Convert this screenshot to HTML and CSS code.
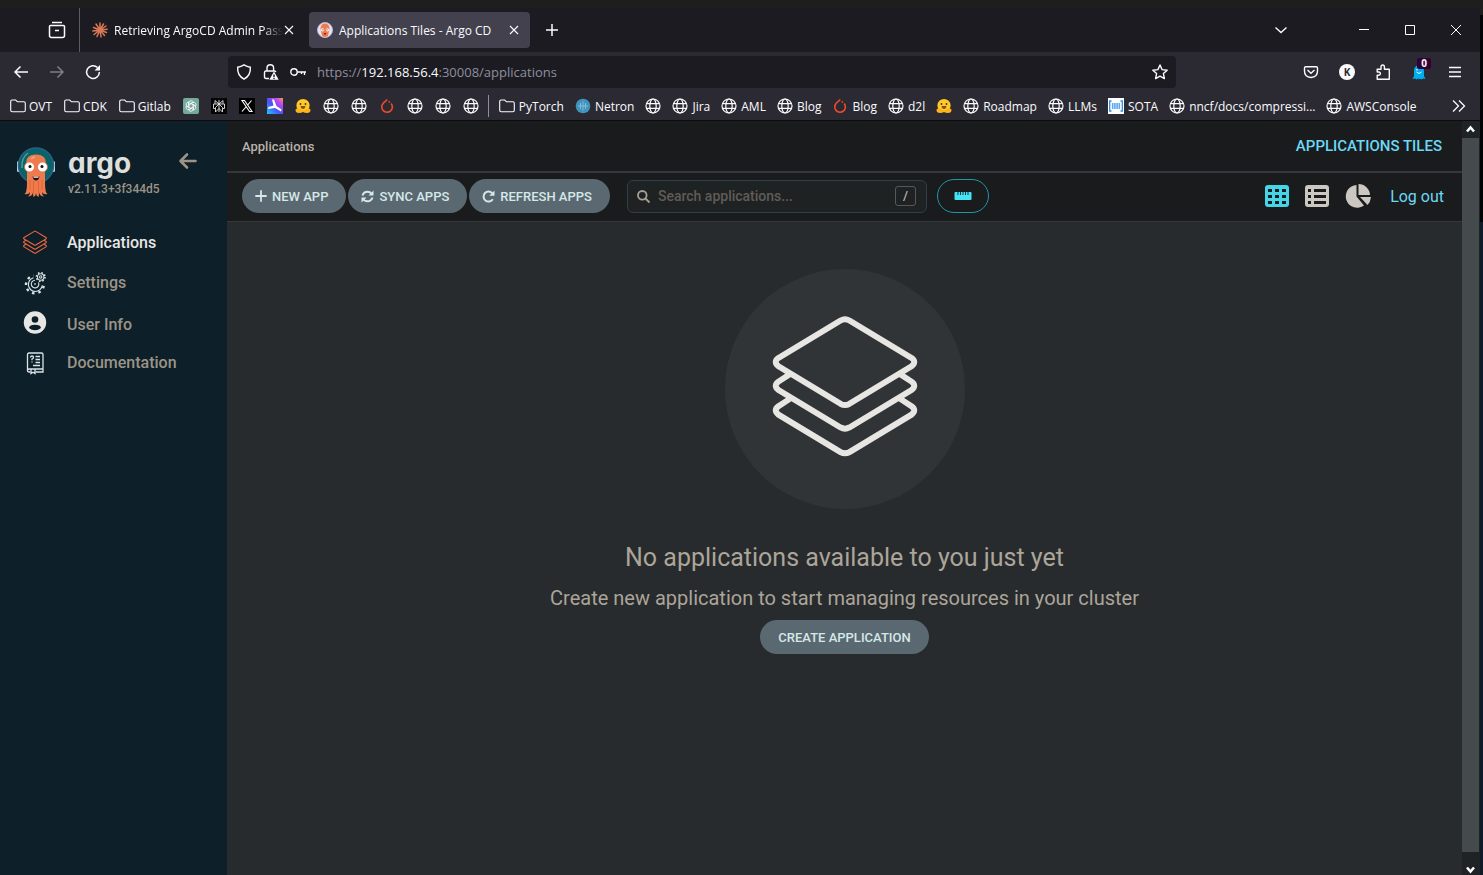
FILE: index.html
```html
<!DOCTYPE html>
<html lang="en">
<head>
<meta charset="utf-8">
<title>Applications Tiles - Argo CD</title>
<link rel="stylesheet" href="styles.css">
</head>
<body>
<svg class="defs" aria-hidden="true">
  <symbol id="globe" viewBox="0 0 16 16"><g fill="none" stroke="#fbfbfe" stroke-width="1.2"><circle cx="8" cy="8" r="7"/><ellipse cx="8" cy="8" rx="3.2" ry="7"/><path d="M1.5 5.6h13M1.5 10.4h13"/></g></symbol>
  <symbol id="folder" viewBox="0 0 16 16"><path d="M2.2 2h3.5l1.8 1.8h6.3q1.5 0 1.5 1.5v6.9q0 1.5-1.5 1.5H2.200q-1.500 0-1.500-1.500V3.500Q.7 2 2.200 2z" fill="none" stroke="#fbfbfe" stroke-width="1.1"/></symbol>
  <symbol id="hug" viewBox="0 0 16 16"><circle cx="8" cy="7.500" r="6.600" fill="#ffc928"/><path d="M.5 12q0-2 2.500-1.500L8 12.500l5-2q2.500-.5 2.500 1.500 0 3-3.500 3-2.500 0-4-1-1.500 1-4 1-3.500 0-3.500-3z" fill="#ffb31a"/><path d="M5.500 8h5q-.5 3-2.500 3t-2.500-3z" fill="#8a4b20"/><circle cx="5.500" cy="6" r=".9" fill="#3b3222"/><circle cx="10.500" cy="6" r=".9" fill="#3b3222"/></symbol>
  <symbol id="torch" viewBox="0 0 16 16"><path d="M8.300 1.500 4.300 5.200a5.300 5.300 0 1 0 7.800.3" fill="none" stroke="#ee4c2c" stroke-width="1.600"/><circle cx="10.300" cy="3.800" r=".9" fill="#ee4c2c"/></symbol>
  <symbol id="cross" viewBox="0 0 16 16"><path d="m4 4 8 8m0-8-8 8" fill="none" stroke="#fbfbfe" stroke-width="1.100"/></symbol>
  <symbol id="layers" viewBox="0 2 148 144" overflow="visible"><g fill="none" stroke="currentColor" stroke-linejoin="round"><path d="M69.500 4.500q4.500-2.500 9 0l63 38q5.500 4 0 8.500l-63 38q-4.500 2.500-9 0l-63-38q-5.500-4.500 0-8.500z"/><path d="M18 59 6.500 66.500q-5.500 4 0 8.500l63 38q4.500 2.500 9 0l63-38q5.500-4.500 0-8.500L130 59"/><path d="M18 84 6.500 91.500q-5.500 4 0 8.500l63 38q4.500 2.500 9 0l63-38q5.500-4.500 0-8.500L130 84"/></g></symbol>
</svg>

<div class="desktop">
<div class="window">
  <div class="tabstrip">
    <button class="recent" aria-label="Recent browsing"><svg width="18" height="18" viewBox="0 0 18 18" fill="none" stroke="#fbfbfe" stroke-width="1.500"><path d="M4 1.500h10M2.500 4.500h13q1 0 1 1v9q0 2-2 2h-11q-2 0-2-2v-9q0-1 1-1zM7 9.500h4"/></svg></button>
    <div class="tab">
      <svg class="i16" viewBox="0 0 16 16" stroke="#d97757" stroke-width="1.500" stroke-linecap="round"><path d="M8 8V1M8 8l3.500-6M8 8l6-4M8 8l7.200-.8M8 8l6.500 2.500M8 8l4.500 5.500M8 8l1 7M8 8l-3 6.500M8 8l-6 4.500M8 8l-7.200 1M8 8 1.500 5.500M8 8 4 2"/></svg>
      <span class="tab-title fade">Retrieving ArgoCD Admin Passw</span>
      <button class="tab-close" aria-label="Close tab"><svg class="i16"><use href="#cross"/></svg></button>
    </div>
    <div class="tab active">
      <svg class="i16" viewBox="0 0 16 16"><circle cx="8" cy="8" r="7.500" fill="#e8e4f2" stroke="#b8b4e0"/><path d="M3.500 7q0-5.500 4.500-5.500T12.500 7l-1.500 7q-3 2-6 0z" fill="#ef7b4d"/><circle cx="5.600" cy="7.800" r="1.600" fill="#fff"/><circle cx="10.400" cy="7.800" r="1.600" fill="#fff"/><circle cx="6" cy="7.800" r=".6" fill="#223"/><circle cx="10" cy="7.800" r=".6" fill="#223"/><path d="M7 11h2v1.500H7z" fill="#6d2c1c"/></svg>
      <span class="tab-title">Applications Tiles - Argo CD</span>
      <button class="tab-close" aria-label="Close tab"><svg class="i16"><use href="#cross"/></svg></button>
    </div>
    <button class="newtab" aria-label="New tab"><svg class="i16" viewBox="0 0 16 16" stroke="#fbfbfe" stroke-width="1.500"><path d="M8 2v12M2 8h12"/></svg></button>
    <button class="alltabs" aria-label="List all tabs"><svg class="i16" viewBox="0 0 16 16" fill="none" stroke="#fbfbfe" stroke-width="1.400"><path d="m2.500 5.500 5.500 5 5.500-5"/></svg></button>
    <button class="wbtn" aria-label="Minimize"><svg width="10" height="10" viewBox="0 0 10 10"><path d="M0 4h10v1H0z" fill="#fff"/></svg></button>
    <button class="wbtn" aria-label="Maximize"><svg width="10" height="10" viewBox="0 0 10 10"><path d="M.5.5h9v9h-9z" fill="none" stroke="#fff"/></svg></button>
    <button class="wbtn" aria-label="Close window"><svg width="10" height="10" viewBox="0 0 10 10"><path d="m0 0 10 10M10 0 0 10" stroke="#fff"/></svg></button>
  </div>

  <div class="navbar">
    <button class="nav" aria-label="Back"><svg class="i16" viewBox="0 0 16 16" fill="none" stroke="#fbfbfe" stroke-width="1.500"><path d="M15 8H2M7.500 2.500 2 8l5.500 5.500"/></svg></button>
    <button class="nav dim" aria-label="Forward"><svg class="i16" viewBox="0 0 16 16" fill="none" stroke="#fbfbfe" stroke-width="1.500"><path d="M1 8h13M8.500 2.500 14 8l-5.500 5.500"/></svg></button>
    <button class="nav" aria-label="Reload"><svg class="i16" viewBox="0 0 16 16" fill="none" stroke="#fbfbfe" stroke-width="1.500"><path d="M12.500 3.500A6.400 6.400 0 1 0 14.400 8"/><path d="M15 1v5.500H9.500z" fill="#fbfbfe" stroke="none"/></svg></button>
    <span class="spring"></span>
    <div class="urlbar">
      <svg class="i16" viewBox="0 0 16 16" fill="none" stroke="#fbfbfe" stroke-width="1.400"><path d="M8 .9q3 1.900 6.300 2.300.7 8-6.300 12-7-4-6.300-12Q5 2.800 8 .9z"/></svg>
      <svg class="i16" viewBox="0 0 16 16" fill="none" stroke="#fbfbfe" stroke-width="1.400"><path d="M4 7V4.200q0-3.400 3.300-3.400t3.300 3.400V7M6 14.500H3q-1.500 0-1.500-1.500V8.500Q1.500 7 3 7h8.500q1 0 1.300 1"/><path d="m11 7.500 4.700 8.300H6.300z" fill="#fbfbfe" stroke="none"/><path d="M11 10.500v2.700M11 14v1" stroke="#1c1b22"/></svg>
      <svg class="i16" viewBox="0 0 16 16" fill="none" stroke="#fbfbfe" stroke-width="1.400"><circle cx="4" cy="8" r="3.200"/><path d="M7.200 8H16M14.500 8v3M11.500 8v2"/></svg>
      <div class="url">https://<b>192.168.56.4</b>:30008/applications</div>
      <button class="star" aria-label="Bookmark this page"><svg class="i16" viewBox="0 0 16 16" fill="none" stroke="#fbfbfe" stroke-width="1.400" stroke-linejoin="round"><path d="m8 1 2.100 4.600 5.100.6-3.800 3.400 1 5L8 12.100l-4.400 2.500 1-5L.8 6.200l5.100-.6z"/></svg></button>
    </div>
    <span class="spring"></span>
    <button class="nav" aria-label="Pocket"><svg class="i16" viewBox="0 0 16 16" fill="none" stroke="#fbfbfe" stroke-width="1.400"><path d="M2.800 2.700h10.400q1.300 0 1.300 1.300v3q0 6-6.500 6.500Q1.500 13 1.500 7V4q0-1.300 1.300-1.300z"/><path d="M4.500 6 8 9.200 11.500 6"/></svg></button>
    <button class="nav" aria-label="Account"><span class="avatar">K</span></button>
    <button class="nav" aria-label="Extensions"><svg class="i16" viewBox="0 0 16 16" fill="none" stroke="#fbfbfe" stroke-width="1.400" stroke-linejoin="round"><path d="M2.200 15.200v-4h1.500q1.700 0 1.700-1.600T3.700 8H2.200V5.200H6V3q0-2 1.700-2T9.400 3v2.200h4.900v10z"/></svg></button>
    <button class="nav ghost" aria-label="Ghostery"><svg class="i16" viewBox="0 0 16 16"><path d="M3 12V7q0-5.500 5-5.500T13 7v5l1.500 3-2.500-.5-1.500 1L9 14.500l-1 1-1-1-1.500 1-1.500-1-2.500.5z" fill="#00aef0"/><path d="M5.500 8q2.500 3 5 0" fill="none" stroke="#fff"/><circle cx="6" cy="5.800" r=".8" fill="#fff"/></svg><span class="badge">0</span></button>
    <button class="nav" aria-label="Menu"><svg class="i16" viewBox="0 0 16 16" stroke="#fbfbfe" stroke-width="1.400"><path d="M2 3.500h12M2 8h12M2 12.500h12"/></svg></button>
  </div>

  <nav class="bookmarks" aria-label="Bookmarks">
    <div class="bgroup">
    <a href="#"><svg class="i16"><use href="#folder"/></svg>OVT</a>
    <a href="#"><svg class="i16"><use href="#folder"/></svg>CDK</a>
    <a href="#"><svg class="i16"><use href="#folder"/></svg>Gitlab</a>
    <a href="#" aria-label="ChatGPT"><svg class="i16" viewBox="0 0 16 16"><rect width="16" height="16" rx="2" fill="#75a99c"/><g fill="none" stroke="#fff" stroke-width=".8"><path id="petal" d="M6 8.800V5q0-2.300 2-2.300 1.500 0 2.300 1.200L7 5.800"/><use href="#petal" transform="rotate(60 8 8)"/><use href="#petal" transform="rotate(120 8 8)"/><use href="#petal" transform="rotate(180 8 8)"/><use href="#petal" transform="rotate(240 8 8)"/><use href="#petal" transform="rotate(300 8 8)"/></g></svg></a>
    <a href="#" aria-label="Perplexity"><svg class="i16" viewBox="0 0 16 16"><path fill="#050505" d="M0 0h16v16H0z"/><path d="M8 2v12M4 2.500 8 6l4-3.500v3.300M4 2.500v3.300M2.500 6h11v4.500h-2M2.500 6v4.500h2M4.500 9.500 8 6l3.500 3.500V14L8 10.500 4.500 14z" fill="none" stroke="#e5e5e5" stroke-width=".9"/></svg></a>
    <a href="#" aria-label="X"><svg class="i16" viewBox="0 0 16 16"><path fill="#000" d="M0 0h16v16H0z"/><path d="M3 2.500h2.500l7.500 11h-2.500zM12.500 2.500 8.700 7M7 9l-4 4.500" fill="none" stroke="#fff" stroke-width="1.100"/></svg></a>
    <a href="#" aria-label="Lightning"><svg class="i16" viewBox="0 0 16 16"><defs><linearGradient id="lg" x1="0" y1="1" x2="1" y2="0"><stop offset="0" stop-color="#1fc8ff"/><stop offset=".45" stop-color="#4a52f5"/><stop offset=".75" stop-color="#c048f0"/><stop offset="1" stop-color="#ff9c4a"/></linearGradient></defs><path fill="url(#lg)" d="M0 0h16v16H0z"/><path d="M5 1.500h2L9.500 8l5 3.500-.5 2L8 10l-7 1 .5-2 5-1.500z" fill="#fff"/></svg></a>
    <a href="#" aria-label="Hugging Face"><svg class="i16"><use href="#hug"/></svg></a>
    <a href="#" aria-label="Site"><svg class="i16"><use href="#globe"/></svg></a>
    <a href="#" aria-label="Site"><svg class="i16"><use href="#globe"/></svg></a>
    <a href="#" aria-label="PyTorch site"><svg class="i16"><use href="#torch"/></svg></a>
    <a href="#" aria-label="Site"><svg class="i16"><use href="#globe"/></svg></a>
    <a href="#" aria-label="Site"><svg class="i16"><use href="#globe"/></svg></a>
    <a href="#" aria-label="Site"><svg class="i16"><use href="#globe"/></svg></a>
    </div>
    <div class="bgroup named">
    <a href="#"><svg class="i16"><use href="#folder"/></svg>PyTorch</a>
    <a href="#"><svg class="i16" viewBox="0 0 16 16"><circle cx="8" cy="8" r="7.300" fill="#3f93bd"/><path d="M5.500 5v6M8 3.500v9M10.500 5v6M3 8h10" stroke="#86c3dd" stroke-width=".9"/></svg>Netron</a>
    <a href="#" aria-label="Site"><svg class="i16"><use href="#globe"/></svg></a>
    <a href="#"><svg class="i16"><use href="#globe"/></svg>Jira</a>
    <a href="#"><svg class="i16"><use href="#globe"/></svg>AML</a>
    <a href="#"><svg class="i16"><use href="#globe"/></svg>Blog</a>
    <a href="#"><svg class="i16"><use href="#torch"/></svg>Blog</a>
    <a href="#"><svg class="i16"><use href="#globe"/></svg>d2l</a>
    <a href="#" aria-label="Hugging Face"><svg class="i16"><use href="#hug"/></svg></a>
    <a href="#"><svg class="i16"><use href="#globe"/></svg>Roadmap</a>
    <a href="#"><svg class="i16"><use href="#globe"/></svg>LLMs</a>
    <a href="#"><svg class="i16" viewBox="0 0 16 16"><path fill="#fff" d="M0 0h16v16H0z"/><path d="M3.500 3H1.700v10h1.800M12.500 3h1.800v10h-1.800" fill="none" stroke="#2f8de0" stroke-width="1.300"/><path d="M4.700 5v6M6.900 5v6M9.100 5v6M11.300 5v6" stroke="#5aaaf0" stroke-width="1.600"/></svg>SOTA</a>
    <a href="#"><svg class="i16"><use href="#globe"/></svg>nncf/docs/compressi...</a>
    <a href="#"><svg class="i16"><use href="#globe"/></svg>AWSConsole</a>
    </div>
    <button class="more" aria-label="More bookmarks"><svg class="i16" viewBox="0 0 16 16" fill="none" stroke="#fbfbfe" stroke-width="1.300"><path d="m2 2.500 5.500 5.500L2 13.500M8 2.500 13.500 8 8 13.500"/></svg></button>
  </nav>

  <div class="page">
    <aside class="sidebar">
      <div class="brand">
        <svg class="mascot" width="40" height="52" viewBox="0 0 40 52">
          <rect x="1" y="15" width="3" height="11" rx="1.500" fill="#b9d5e8"/><rect x="36" y="15" width="3" height="11" rx="1.500" fill="#b9d5e8"/>
          <circle cx="20" cy="19.500" r="17.500" fill="#07646a" stroke="#2a5f80" stroke-width="1.500"/>
          <path d="M6 22Q5 12 12 7" fill="none" stroke="#4f9ba0" stroke-width="1.500"/>
          <path d="M10 17Q10 8.500 20 8.500T30 17q1 4-1 8v11q0 11 2.500 12-4 1-5.500-2 0 3 2 4.500-4 0-5-4 0 3-.5 4.500-2.500-1-2.500-4.500 0 3.500-2.500 4.500-.5-2-.5-4.500-1 4-5 4 2-1.500 2-4.500-1.500 3-5.500 2Q11 47 11 36V25q-2-4-1-8z" fill="#ef7b4d"/>
          <path d="M14 34v10M17.500 35v12M22.500 35v12M26 34v10" stroke="#d95f35" stroke-width=".8"/><path d="M15 13q2-2 4-2" stroke="#f7a789" stroke-width="1.500" fill="none"/>
          <circle cx="13.500" cy="21" r="5" fill="#fff" stroke="#e45f3a" stroke-width=".7"/><circle cx="26.500" cy="21" r="5" fill="#fff" stroke="#e45f3a" stroke-width=".7"/><circle cx="14" cy="20.500" r="1.500" fill="#111"/><circle cx="26" cy="20.500" r="1.500" fill="#111"/>
          <path d="M16.500 30.500h7q-.8 4-3.500 4t-3.500-4z" fill="#2a0e12"/><path d="M17.500 30.500h5v1.200h-5z" fill="#fff"/>
        </svg>
        <div class="brand-text"><div class="wordmark">argo</div><div class="version">v2.11.3+3f344d5</div></div>
        <button class="collapse" aria-label="Collapse sidebar"><svg width="18" height="16" viewBox="0 0 18 16" fill="none" stroke="#9c9487" stroke-width="2.600" stroke-linecap="round" stroke-linejoin="round"><path d="M16.500 8H2M8 1.500 1.500 8 8 14.500"/></svg></button>
      </div>
      <nav class="menu" aria-label="Main">
        <a class="current" href="#"><svg class="i24 orange" viewBox="0 -4 148 144" stroke-width="7"><use href="#layers" width="148" height="144"/></svg><span>Applications</span></a>
        <a href="#"><svg class="i24" viewBox="0 0 24 24" fill="none" stroke="#d9e4e8" stroke-width="1.100"><path d="M19.300 15.300A7 7 0 1 1 10.500 7.700"/><path d="M20.700 15.800A8.900 8.900 0 1 1 10.700 5.700" stroke-width="2.400" stroke-dasharray="2.600 3.900"/><path d="M15.500 12.500A3.800 3.800 0 1 1 12 10.300"/><path d="M12 13v2"/><circle cx="17.700" cy="7" r="3.200"/><circle cx="17.700" cy="7" r="1.200"/><circle cx="17.700" cy="7" r="4.300" stroke-width="1.600" stroke-dasharray="1.600 1.780"/></svg><span>Settings</span></a>
        <a class="user" href="#"><svg class="i24" viewBox="0 0 24 24"><circle cx="12" cy="12.500" r="11.200" fill="#e8e6e3"/><circle cx="12" cy="9.500" r="3.300" fill="#0d1f28"/><path d="M6 18q.5-3.300 6-3.300t6 3.300q-2.500 2.300-6 2.300T6 18z" fill="#0d1f28"/></svg><span>User Info</span></a>
        <a href="#"><svg class="i24" viewBox="0 -1 24 24" fill="none" stroke="#d9e4e8" stroke-width="1.300"><path d="M7.500 21H6q-1.500 0-1.500-1.500V3.500Q4.500 2 6 2h12.500q1.500 0 1.500 1.500V21h-7.500M4.500 19.500Q4.500 18 6 18h14"/><path d="M8 18v4.500l2-1.200 2 1.200V18M7.500 6.500q0-1.500 1.500-1.500t1.500 1.300Q10.500 7.500 9 8v1.300M9 10.500v1M12.500 5.500H17M12.500 8.500H17M12.500 11.500H17M10 14.500h7"/></svg><span>Documentation</span></a>
      </nav>
    </aside>

    <main class="main">
      <header class="topline"><span class="crumb">Applications</span><span class="viewname">APPLICATIONS TILES</span></header>
      <div class="toolbar">
        <div class="actions">
          <button class="btn"><svg width="12" height="12" viewBox="0 0 12 12" stroke="currentColor" stroke-width="1.800" stroke-linecap="round"><path d="M6 1v10M1 6h10"/></svg>NEW APP</button>
          <button class="btn"><svg width="13" height="13" viewBox="0 0 13 13" fill="none" stroke="currentColor" stroke-width="2"><path d="M1.500 5.500Q2.800 1.700 6.500 1.700q2.500 0 4.200 2M11.500 7.500q-1.300 3.800-5 3.800-2.500 0-4.200-2"/><path d="M12.500.5v5h-5zM.5 12.500v-5h5z" fill="currentColor" stroke="none"/></svg>SYNC APPS</button>
          <button class="btn"><svg width="13" height="13" viewBox="0 0 13 13" fill="none" stroke="currentColor" stroke-width="2"><path d="M10.500 3.500a5 5 0 1 0 .3 5.700"/><path d="M12.500.5v5.300H7.200z" fill="currentColor" stroke="none"/></svg>REFRESH APPS</button>
        </div>
        <label class="search"><svg width="13" height="13" viewBox="0 0 13 13" fill="none" stroke="#a8a095" stroke-width="1.800"><circle cx="5.300" cy="5.300" r="4.300"/><path d="m8.500 8.500 4 4"/></svg><input type="text" placeholder="Search applications..." aria-label="Search applications"><kbd>/</kbd></label>
        <button class="health" aria-label="Toggle health status bar"><svg width="18" height="8" viewBox="0 0 18 8"><rect width="17" height="8" x=".5" rx="1" fill="#45e3f5"/><path d="M4 0v3M6.500 0v3M9 0v3M11.500 0v3M14 0v3" stroke="#14343a"/></svg></button>
        <div class="views">
          <button class="view" aria-label="Tiles"><svg width="24" height="22" viewBox="0 0 24 22"><rect width="24" height="22" rx="3" fill="#45d5e8"/><path d="M3 4h4v3H3zM10 4h4v3h-4zM17 4h4v3h-4zM3 10h4v3H3zM10 10h4v3h-4zM17 10h4v3h-4zM3 16h4v3H3zM10 16h4v3h-4zM17 16h4v3h-4z" fill="#1a1b1d"/></svg></button>
          <button class="view" aria-label="List"><svg width="24" height="22" viewBox="0 0 24 22"><rect width="24" height="22" rx="3" fill="#ccc7c0"/><path d="M3 4h3v3H3zM9 4h12v3H9zM3 10h3v3H3zM9 10h12v3H9zM3 16h3v3H3zM9 16h12v3H9z" fill="#1a1b1d"/></svg></button>
          <button class="view" aria-label="Summary"><svg width="26" height="24" viewBox="0 0 26 24" fill="#ccc7c0"><path d="M11.500 1v11.500l7.500 9A11.400 11.400 0 1 1 11.500 1z"/><path d="M13.500 0A11.500 11.500 0 0 1 25 11H13.500z"/><path d="M15 13h11q-.5 5-3.500 8z"/></svg></button>
          <a class="logout" href="#">Log out</a>
        </div>
      </div>
      <section class="empty">
        <div class="disc"><svg width="146" height="142" viewBox="0 0 148 144" stroke-width="6"><use href="#layers" width="148" height="144"/></svg></div>
        <h1>No applications available to you just yet</h1>
        <h2>Create new application to start managing resources in your cluster</h2>
        <button class="btn create">CREATE APPLICATION</button>
      </section>
    </main>
    <div class="scroll" aria-hidden="true">
      <svg width="17" height="17" viewBox="0 0 17 17" fill="none" stroke="#fff" stroke-width="2.500"><path d="m5 10.500 3.500-4 3.500 4"/></svg>
      <div class="thumb"></div>
      <svg width="17" height="23" viewBox="0 0 17 23" fill="none" stroke="#fff" stroke-width="2.500"><path d="m5 15.500 3.500 4 3.500-4"/></svg>
    </div>
  </div>
</div>
</div>
</body>
</html>
```
FILE: styles.css
```css
* { box-sizing: border-box; }
body { margin: 0; background: #020305; font-family: Roboto, sans-serif; }
button { border: 0; padding: 0; background: none; color: inherit; font: inherit; display: flex; align-items: center; justify-content: center; }
a { color: inherit; text-decoration: none; }
svg { display: block; flex: none; overflow: visible; }
.defs { position: absolute; width: 0; height: 0; }
.i16 { width: 16px; height: 16px; }
.i24 { width: 24px; height: 24px; }

.desktop { height: 100vh; padding: 8px 3px 0 0; background: linear-gradient(#1e1e1e 15px, #020305 15px, #020305 222px, #0f1a28 222px); }
.window { height: 100%; display: flex; flex-direction: column; color: #fbfbfe; font-family: "Open Sans", "Noto Sans", sans-serif; font-size: 12px; background: #1c1b22; }

.tabstrip { height: 44px; flex: none; display: flex; align-items: center; padding-right: 1px; }
.recent { width: 80px; height: 44px; padding-left: 34px; border-right: 1px solid #5b5b66; margin-right: 4px; }
.tab { width: 221px; height: 36px; padding: 0 8px; margin-right: 4px; border-radius: 4px; display: flex; align-items: center; gap: 6px; }
.tab.active { background: #42414d; }
.tab-title { flex: 1; min-width: 0; overflow: hidden; white-space: nowrap; }
.fade { margin-right: -8px; -webkit-mask-image: linear-gradient(90deg, #000 88%, transparent); mask-image: linear-gradient(90deg, #000 88%, transparent); }
.newtab { width: 36px; height: 36px; }
.alltabs { width: 36px; height: 36px; margin-left: auto; margin-right: 42px; }
.wbtn { width: 46px; height: 44px; }

.navbar { height: 40px; flex: none; display: flex; align-items: center; padding: 0 7px 0 3px; background: #2b2a33; }
.nav { width: 36px; height: 32px; flex: none; }
.dim { opacity: .4; }
.spring { flex: 0 1 117px; }
.urlbar { flex: 1; height: 32px; display: flex; align-items: center; gap: 11px; padding: 0 8px; border-radius: 4px; background: #1c1b22; }
.url { flex: 1; font-size: 13px; color: #8f8f9d; }
.url b { font-weight: 400; color: #fbfbfe; }
.avatar { width: 16px; height: 16px; border-radius: 50%; background: #fbfbfe; color: #2b2a33; font-size: 10px; font-weight: 700; line-height: 16px; }
.ghost { position: relative; }
.badge { position: absolute; left: 16px; top: 2px; width: 14px; height: 11px; border-radius: 2px; background: #330033; font-size: 10px; font-weight: 700; line-height: 11px; }

.bookmarks { height: 29px; flex: none; display: flex; align-items: center; padding: 0 13px 0 10px; background: #2b2a33; border-bottom: 1px solid #0c0c0d; white-space: nowrap; }
.bgroup { display: flex; align-items: center; gap: 12px; height: 22px; }
.bookmarks a { display: flex; align-items: center; gap: 3px; }
.named { gap: 11px; margin-left: 9px; padding-left: 10px; border-left: 1px solid #8f8f9d; }
.bookmarks .named a { gap: 4px; }
.more { margin-left: auto; }

.page { flex: 1; min-height: 0; display: flex; font-family: Roboto, sans-serif; font-weight: 500; }
.sidebar { width: 227px; flex: none; background: #0d1f28; color: #9c9487; }
.brand { display: flex; padding: 25px 30px 0 16px; height: 101px; }
.brand-text { flex: 1; padding-left: 12px; }
.wordmark { height: 35px; color: #dedfdd; font: 700 28px/35px Inter, sans-serif; font-feature-settings: "cv11"; }
.version { font-size: 12px; line-height: 16px; }
.collapse { height: 30px; }
.menu a { display: flex; align-items: center; height: 40px; padding-left: 23px; gap: 20px; font-size: 16px; }
.menu .user span { padding-top: 5px; }
.menu .current { color: #e8e6e3; }
.menu .orange { color: #ee6540; }

.main { flex: 1; min-width: 0; display: flex; flex-direction: column; background: #272b2d; }
.topline { height: 52px; flex: none; display: flex; align-items: center; justify-content: space-between; padding: 0 20px 0 15px; background: #1a1b1d; border-bottom: 2px solid #36393b; font-size: 13px; color: #b8b2a9; }
.viewname { color: #6bd9f5; font-size: 15px; }
.toolbar { height: 49px; flex: none; display: flex; align-items: center; padding: 0 18px 2px 15px; background: #1a1b1d; border-bottom: 1px solid #36393b; }
.actions { display: flex; gap: 2px; }
.btn { height: 34px; padding: 0 18px 0 13px; gap: 5px; border-radius: 17px; background: #5a6971; color: #d5e8e8; font-size: 13px; font-weight: 500; }
.search { width: 300px; height: 33px; margin: 0 10px 0 17px; padding: 0 10px 0 9px; display: flex; align-items: center; gap: 8px; border: 1px solid #2c3f4b; border-radius: 6px; background: #1f2223; }
.search input { flex: 1; min-width: 0; border: 0; padding: 0; outline: 0; background: none; color: #b8b2a9; font: 500 14px Roboto, sans-serif; }
.search input::placeholder { color: #605c57; opacity: 1; }
.search kbd { width: 21px; height: 20px; border: 1px solid #55585a; border-radius: 3px; color: #b8b2a9; font: 500 13px/18px Roboto, sans-serif; text-align: center; }
.health { width: 52px; height: 34px; border: 1px solid #1b98a6; border-radius: 17px; }
.views { display: flex; align-items: center; gap: 16px; margin-left: auto; }
.logout { margin-left: 3px; color: #6bd9f5; font-size: 16px; font-weight: 400; }

.empty { flex: 1; display: flex; flex-direction: column; align-items: center; padding-top: 47px; color: #aca59a; }
.disc { width: 240px; height: 240px; display: flex; align-items: center; justify-content: center; border-radius: 50%; background: #303437; color: #e8e6e3; }
.empty h1 { margin: 34px 0 0; font-size: 25px; line-height: 30px; font-weight: 400; }
.empty h2 { margin: 12px 0 9px; font-size: 20px; line-height: 26px; font-weight: 400; }
.create { padding: 0 18px; }

.scroll { width: 18px; flex: none; display: flex; flex-direction: column; background: #202325; }
.thumb { flex: 1; width: 17px; background: #454a4d; }
```
